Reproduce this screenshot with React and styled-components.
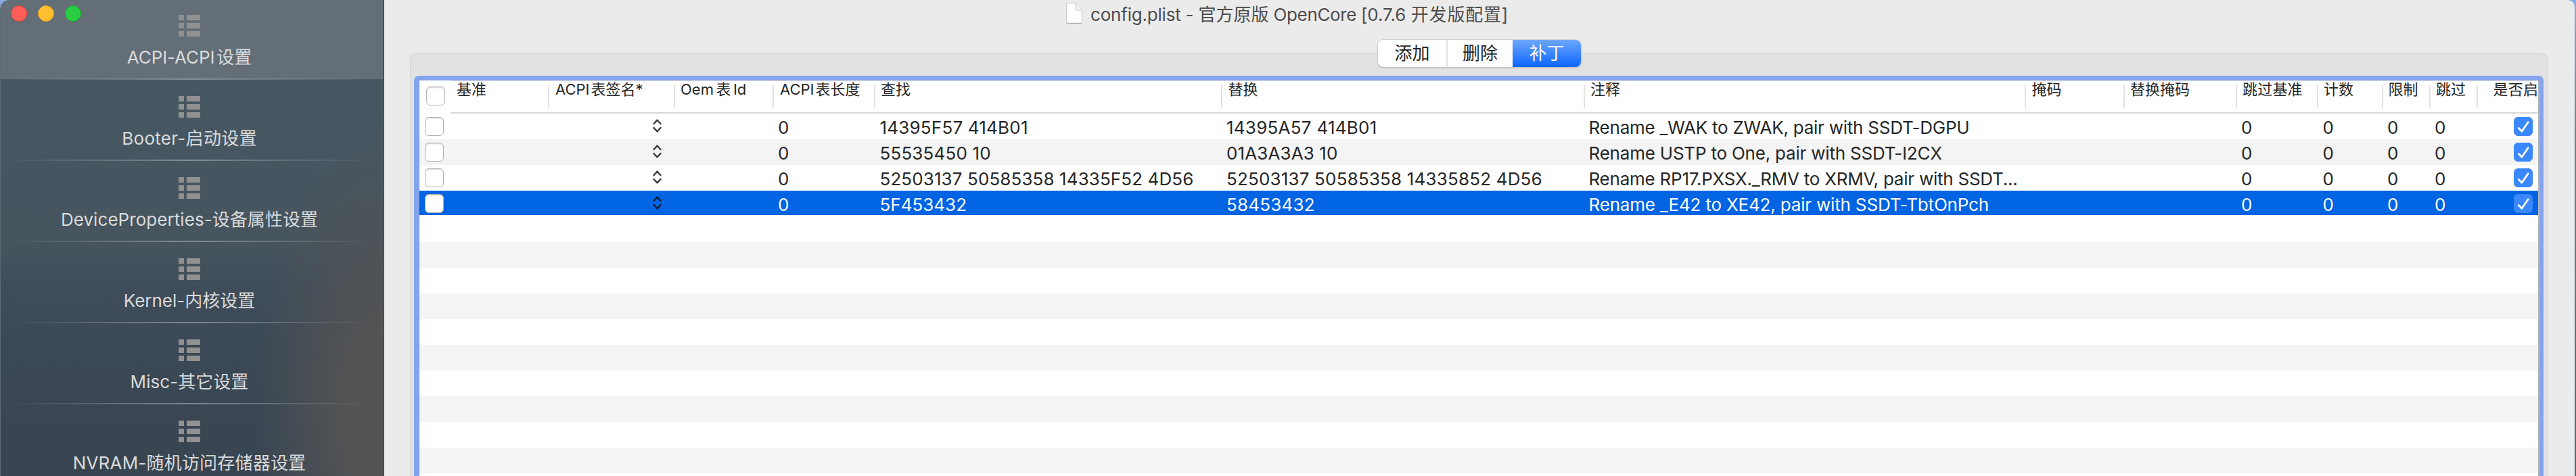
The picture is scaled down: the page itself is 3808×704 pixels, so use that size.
import React from "react";
import styled, { createGlobalStyle, css } from "styled-components";

const Global = createGlobalStyle`
  * { box-sizing: border-box; }
  body {
    margin: 0;
    background: linear-gradient(180deg, #88aae6 0, #7c9ad0 60px, #64809c 200px, #4c6a78 704px);
    font-family: Inter, "Noto Sans CJK SC", sans-serif;
    font-size: 26px;
    color: #262626;
  }
`;

const Window = styled.div`
  width: 3806px;
  height: 704px;
  display: flex;
  overflow: hidden;
  border-radius: 14px 10px 0 0;
  background: #ebebeb;
`;

const Sidebar = styled.nav`
  position: relative;
  flex: none;
  width: 568px;
  height: 704px;
  overflow: hidden;
  border-left: 1px solid #5c6a74;
  border-right: 2px solid #4e4f52;
  background:
    radial-gradient(ellipse 190px 430px at 100% 610px, #545455 0, #535455 28%, rgba(83, 84, 86, 0) 100%),
    linear-gradient(180deg, #465863 0, #475762 200px, #46545d 360px, #3f4d5a 430px, #3b4855 520px, #384551 704px);
`;

const TrafficLights = styled.div`
  position: absolute;
  left: 15px;
  top: 8px;
  display: flex;
  gap: 16px;
`;

const Light = styled.span`
  width: 24px;
  height: 24px;
  border-radius: 50%;
  border: 1px solid ${(p) => p.$edge};
  background: ${(p) => p.$fill};
`;

const NavItem = styled.div`
  height: 120px;
  padding-top: 22px;
  display: flex;
  flex-direction: column;
  align-items: center;
  ${(p) =>
    p.$active &&
    css`
      background: linear-gradient(#636e77, #636e77) 0 0 / 100% 117px no-repeat;
    `}
`;

const NavIcon = styled.svg`
  display: block;
  width: 32px;
  height: 32px;
  margin-right: 7px;
  fill: #919191;
`;

const NavLabel = styled.div`
  margin: 10px 7px 0 0;
  height: 52px;
  line-height: 41px;
  color: #dadbdc;
  white-space: nowrap;
  letter-spacing: ${(p) => p.$ls || 0}px;
`;

const Gap = styled.span`
  margin-left: ${(p) => p.$w}px;
`;

const NavRule = styled.div`
  width: 100%;
  height: 2px;
  background: linear-gradient(90deg, rgba(150, 158, 162, 0) 1%, rgba(150, 158, 162, 0.75) 50%, rgba(150, 158, 162, 0) 98%);
`;

const Main = styled.main`
  flex: 1;
  min-width: 0;
  display: flex;
  flex-direction: column;
`;

const TitleBar = styled.header`
  height: 59px;
  flex: none;
  display: flex;
  align-items: flex-start;
  padding: 4px 0 0 1008px;
  color: #4c4c4c;
`;

const DocIcon = styled.svg`
  width: 24px;
  height: 31px;
  margin-right: 12px;
`;

const Title = styled.div`
  padding-top: 2px;
  line-height: 31px;
  white-space: pre;
`;

const Tracked = styled.span`
  letter-spacing: ${(p) => p.$ls}px;
`;

const Segmented = styled.div`
  position: relative;
  z-index: 1;
  align-self: center;
  flex: none;
  display: flex;
  width: 300px;
  height: 40px;
  border-radius: 8px;
  overflow: hidden;
  background: #fff;
  box-shadow: 0 0 0 1px #cfcfcf, 0 1px 1px 1px #b4b4b4;
`;

const Segment = styled.div`
  flex: 1 1 0;
  padding-top: 4px;
  line-height: 31px;
  text-align: center;
  border-right: 2px solid #e0e0e0;
  &:nth-child(2) {
    flex: 0 0 96px;
    border-right: 0;
  }
  ${(p) =>
    p.$active &&
    css`
      color: #fff;
      border-right: 0;
      background: linear-gradient(180deg, #6ea7fb, #0b66ff);
    `}
`;

const GroupBox = styled.section`
  flex: 1;
  min-height: 0;
  margin: -21px 40px 0 38px;
  padding: 33px 5px 0;
  display: flex;
  border: 1px solid #d4d4d4;
  border-bottom: 0;
  border-radius: 9px 9px 0 0;
  background: #e2e2e2;
`;

const FocusRing = styled.div`
  flex: 1;
  display: flex;
  padding: 7px 6px 0 7px;
  border-radius: 7px 7px 0 0;
  background: #84a5ed;
`;

const Table = styled.div`
  flex: 1;
  min-width: 0;
  display: flex;
  flex-direction: column;
  overflow: hidden;
  border-left: 1px solid #7a90d0;
  border-right: 2px solid #b4b8c2;
  background: #fff;
`;

const columns = "46px 146px 186px 146px 150px 513px 536px 652px 146px 166px 120px 96px 70px 70px 89px";

const HeaderRow = styled.div`
  flex: none;
  display: grid;
  grid-template-columns: ${columns};
  height: 49px;
`;

const HeaderCell = styled.div`
  position: relative;
  height: 49px;
  padding-left: ${(p) => p.$inset || 9}px;
  font-size: 22px;
  line-height: 26px;
  white-space: nowrap;
  overflow: hidden;
  letter-spacing: ${(p) => p.$ls || 0}px;
  border-bottom: 2px solid #d6d6d6;
  box-shadow: inset 0 1px 0 #e0e0e0;
  &:not(:last-child)::after {
    content: "";
    position: absolute;
    right: 0;
    top: 7px;
    width: 2px;
    height: 34px;
    background: #e2e2e2;
  }
`;

const HeaderCheck = styled.div`
  padding: 9px 0 0 10px;
`;

const Body = styled.div`
  flex: 1;
  min-height: 0;
  overflow: hidden;
`;

const Row = styled.div`
  display: grid;
  grid-template-columns: ${columns};
  height: 38px;
  background: #fff;
  &:nth-child(even) {
    background: #f4f4f4;
  }
  ${(p) =>
    p.$selected &&
    css`
      && {
        color: #fff;
        background: linear-gradient(#0064e3, #0064e3) 0 0 / 100% 36px no-repeat #f4f4f4;
      }
    `}
`;

const Cell = styled.div`
  height: 38px;
  padding-left: ${(p) => p.$inset ?? 6}px;
  line-height: 41px;
  white-space: nowrap;
  letter-spacing: ${(p) => p.$ls || 0}px;
`;

const CheckCell = styled.div`
  padding: 5px 0 0 ${(p) => p.$inset}px;
`;

const Checkbox = styled.div`
  width: 28px;
  height: 28px;
  border-radius: 6px;
  border: 1px solid #b2b2b2;
  background: #fff;
  box-shadow: inset 0 2px 2px -1px #d0d0d0;
  ${(p) =>
    p.$checked &&
    css`
      border-color: #3a86fb;
      background: #3b88fd;
      box-shadow: none;
    `}
`;

const Tick = styled.svg`
  display: block;
  width: 26px;
  height: 26px;
  fill: none;
  stroke: #fff;
  stroke-width: 2.8;
  stroke-linecap: round;
  stroke-linejoin: round;
`;

const StepperCell = styled.div`
  display: flex;
  justify-content: flex-end;
  padding: 8px 20px 0 0;
`;

const Stepper = styled.svg`
  width: 13px;
  height: 20px;
  fill: none;
  stroke: ${(p) => (p.$selected ? "#0b1c38" : "#3c3c3c")};
  stroke-width: 2.4;
  stroke-linecap: round;
  stroke-linejoin: round;
`;

const nav = [
  { id: "acpi", label: <>ACPI-ACPI<Gap $w={3}>设置</Gap></>, ls: -0.1 },
  { id: "booter", label: "Booter-启动设置", ls: 0.3 },
  { id: "device", label: "DeviceProperties-设备属性设置", ls: 0.06 },
  { id: "kernel", label: "Kernel-内核设置" },
  { id: "misc", label: "Misc-其它设置", ls: 0.05 },
  { id: "nvram", label: "NVRAM-随机访问存储器设置", ls: 0.2 },
];

const headers = [
  { t: "基准" },
  { t: <>ACPI<Gap $w={2}>表签名*</Gap></> },
  { t: <>Oem<Gap $w={3.5}>表</Gap><Gap $w={3.5}>Id</Gap></>, inset: 8 },
  { t: <>ACPI<Gap $w={2}>表长度</Gap></> },
  { t: "查找", inset: 8 },
  { t: "替换", inset: 8.5 },
  { t: "注释", inset: 8 },
  { t: "掩码", inset: 8.5 },
  { t: "替换掩码", inset: 8 },
  { t: "跳过基准", inset: 8, ls: 0.2 },
  { t: "计数", inset: 8 },
  { t: "限制", inset: 7.5 },
  { t: "跳过", inset: 8 },
  { t: "是否启", inset: 22.5, ls: 0.2 },
];

const patches = [
  { find: "14395F57 414B01", fl: 0.2, rep: "14395A57 414B01", rl: 0.25, note: "Rename _WAK to ZWAK, pair with SSDT-DGPU", nl: -0.24 },
  { find: "55535450 10", fl: 0.15, rep: "01A3A3A3 10", rl: 0.12, note: "Rename USTP to One, pair with SSDT-I2CX", nl: -0.21 },
  { find: "52503137 50585358 14335F52 4D56", fl: 0.1, rep: "52503137 50585358 14335852 4D56", rl: 0.17, note: "Rename RP17.PXSX._RMV to XRMV, pair with SSDT...", nl: -0.24 },
  { find: "5F453432", fl: 0, rep: "58453432", rl: 0.2, note: "Rename _E42 to XE42, pair with SSDT-TbtOnPch", nl: -0.18, selected: true },
];

function PatchRow({ find, fl, rep, rl, note, nl, selected }) {
  return (
    <Row $selected={selected}>
      <CheckCell $inset={8}><Checkbox /></CheckCell>
      <Cell />
      <StepperCell>
        <Stepper $selected={selected} viewBox="0 0 13 20">
          <path d="M1.5 7 6.5 1.6 11.5 7M1.5 13 6.5 18.4 11.5 13" />
        </Stepper>
      </StepperCell>
      <Cell />
      <Cell>0</Cell>
      <Cell $inset={6.5} $ls={fl}>{find}</Cell>
      <Cell $ls={rl}>{rep}</Cell>
      <Cell $inset={5.5} $ls={nl}>{note}</Cell>
      <Cell />
      <Cell />
      <Cell>0</Cell>
      <Cell $inset={6.5}>0</Cell>
      <Cell>0</Cell>
      <Cell>0</Cell>
      <CheckCell $inset={53}>
        <Checkbox $checked>
          <Tick viewBox="0 0 26 26"><path d="M6.3 15.5 10.9 20.3 20.2 6.8" /></Tick>
        </Checkbox>
      </CheckCell>
    </Row>
  );
}

export default function App() {
  return (
    <>
      <Global />
      <Window>
        <Sidebar>
          {nav.map((n, i) => (
            <NavItem key={n.id} $active={i === 0}>
              <NavIcon viewBox="0 0 32 32">
                <path d="M0 0h8v8H0zM12 0h20v8H12zM0 12h8v8H0zM12 12h20v8H12zM0 24h8v8H0zM12 24h20v8H12z" />
              </NavIcon>
              <NavLabel $ls={n.ls}>{n.label}</NavLabel>
              <NavRule />
            </NavItem>
          ))}
          <TrafficLights>
            <Light $fill="#ff5f58" $edge="#e2443e" />
            <Light $fill="#ffbf2f" $edge="#dfa023" />
            <Light $fill="#29cd42" $edge="#1dad2b" />
          </TrafficLights>
        </Sidebar>
        <Main>
          <TitleBar>
            <DocIcon viewBox="0 0 24 31">
              <path d="M.7.7H14L23.3 11V30.3H.7z" fill="#fff" stroke="#c4c4c4" />
              <path d="M14 .7V9.5q0 1.5 1.5 1.5H23.3" fill="#f2f2f2" stroke="#c4c4c4" />
              <path d="M.5 30.4h23" stroke="#a8a8a8" />
            </DocIcon>
            <Title>
              <Tracked $ls={-0.2}>config.plist - </Tracked>官方原版
              <Tracked $ls={-0.35}>{" OpenCore ["}</Tracked>
              {"0.7.6 "}
              <Tracked $ls={0.8}>开发版配置]</Tracked>
            </Title>
          </TitleBar>
          <Segmented>
            <Segment>添加</Segment>
            <Segment>删除</Segment>
            <Segment $active>补丁</Segment>
          </Segmented>
          <GroupBox>
            <FocusRing>
              <Table>
                <HeaderRow>
                  <HeaderCheck><Checkbox /></HeaderCheck>
                  {headers.map((h, i) => (
                    <HeaderCell key={i} $inset={h.inset} $ls={h.ls}>{h.t}</HeaderCell>
                  ))}
                </HeaderRow>
                <Body>
                  {patches.map((p) => <PatchRow key={p.find} {...p} />)}
                  {Array.from({ length: 11 }, (_, i) => <Row key={i} />)}
                </Body>
              </Table>
            </FocusRing>
          </GroupBox>
        </Main>
      </Window>
    </>
  );
}
